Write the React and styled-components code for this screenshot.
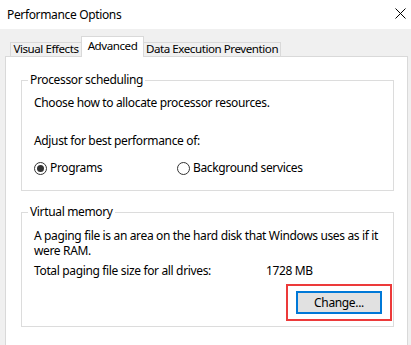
import React from "react";
import styled, { createGlobalStyle } from "styled-components";

const GlobalStyle = createGlobalStyle`
  html, body { margin: 0; padding: 0; }
  body {
    background: #f0f0f0;
    font-family: "Noto Sans", "Liberation Sans", sans-serif;
    font-size: 12px;
    letter-spacing: -0.35px;
    color: #000;
  }
`;

const Window = styled.div`
  width: 411px;
  height: 345px;
  overflow: hidden;
  background: #f0f0f0;
  display: flex;
  flex-direction: column;
`;

const TitleBar = styled.div`
  height: 29px;
  flex: none;
  background: #fff;
  display: flex;
  align-items: center;
  justify-content: space-between;
  padding: 0 5px 0 7px;
  box-sizing: border-box;
  line-height: 16px;
`;

const Title = styled.span`
  font-size: 12px;
`;

const CloseIcon = styled.svg`
  width: 11px;
  height: 11px;
  margin-bottom: 2px;
`;

const Body = styled.div`
  flex: 1;
  display: flex;
  flex-direction: column;
  padding: 7px 3px 0 5px;
  min-height: 0;
`;

const TabStrip = styled.div`
  display: flex;
  align-items: flex-end;
  padding-left: 5px;
  margin-bottom: -1px;
  position: relative;
  z-index: 1;
`;

const Tab = styled.div`
  box-sizing: border-box;
  flex: none;
  width: ${(p) => p.$w}px;
  height: ${(p) => (p.$active ? 21 : 14)}px;
  margin-bottom: ${(p) => (p.$active ? 0 : 1)}px;
  background: ${(p) => (p.$active ? "#fff" : "#f0f0f0")};
  border: 1px solid #d9d9d9;
  border-bottom: none;
  border-left-style: ${(p) => (p.$noLeft ? "none" : "solid")};
  border-right-style: ${(p) => (p.$noRight ? "none" : "solid")};
  text-align: center;
  font-size: 11.6px;
  letter-spacing: -0.45px;
  line-height: 12px;
  padding-top: ${(p) => (p.$active ? 3 : 0)}px;
  white-space: nowrap;
`;

const Panel = styled.div`
  flex: 1;
  background: #fff;
  border: 1px solid #d9d9d9;
  border-bottom: none;
  padding: 15px 13px 0 15px;
  display: flex;
  flex-direction: column;
  gap: 13px;
`;

const Group = styled.fieldset`
  margin: 0;
  border: 1px solid #dcdcdc;
  padding: 0 12px ${(p) => p.$pb}px 12px;
  display: flex;
  flex-direction: column;
  min-width: 0;
`;

const Legend = styled.legend`
  padding: 0 2px;
  margin-left: -6px;
  line-height: 16px;
`;

const Text = styled.div`
  line-height: ${(p) => p.$lh || 16}px;
  margin-top: ${(p) => p.$mt || 0}px;
  white-space: nowrap;
`;

const RadioRow = styled.div`
  display: grid;
  grid-template-columns: 143px auto;
  margin-top: 11px;
  line-height: 16px;
`;

const RadioOption = styled.label`
  display: flex;
  align-items: center;
  gap: 3px;
`;

const RadioCircle = styled.span`
  box-sizing: border-box;
  width: 13px;
  height: 13px;
  border-radius: 50%;
  border: 1px solid #333;
  display: flex;
  align-items: center;
  justify-content: center;
  background: #fff;
  &::after {
    content: "";
    width: 7px;
    height: 7px;
    border-radius: 50%;
    background: ${(p) => (p.$checked ? "#333" : "transparent")};
  }
`;

const TotalRow = styled.div`
  display: grid;
  grid-template-columns: 232px auto;
  line-height: 16px;
  margin-top: 5px;
  white-space: nowrap;
`;

const Highlight = styled.div`
  align-self: flex-end;
  margin-right: -11px;
  margin-top: 5px;
  border: 2px solid #ec3a3a;
  padding: 5px 8px;
  display: flex;
`;

const Button = styled.button`
  box-sizing: border-box;
  width: 86px;
  height: 23px;
  background: #e1e1e1;
  border: 2px solid #0078d7;
  font: inherit;
  font-size: 12px;
  letter-spacing: -0.35px;
  color: #000;
  padding: 0;
  line-height: 16px;
`;

export default function App() {
  return (
    <>
      <GlobalStyle />
      <Window>
        <TitleBar>
          <Title>Performance Options</Title>
          <CloseIcon viewBox="0 0 11 11">
            <path d="M0.5 0.5 L10.5 10.5 M10.5 0.5 L0.5 10.5" stroke="#000" strokeWidth="1" fill="none" />
          </CloseIcon>
        </TitleBar>
        <Body>
          <TabStrip>
            <Tab $w={71} $noRight>Visual Effects</Tab>
            <Tab $w={63} $active>Advanced</Tab>
            <Tab $w={137} $noLeft>Data Execution Prevention</Tab>
          </TabStrip>
          <Panel>
            <Group $pb={14}>
              <Legend>Processor scheduling</Legend>
              <Text $mt={7}>Choose how to allocate processor resources.</Text>
              <Text $mt={22}>Adjust for best performance of:</Text>
              <RadioRow>
                <RadioOption>
                  <RadioCircle $checked />
                  Programs
                </RadioOption>
                <RadioOption>
                  <RadioCircle />
                  Background services
                </RadioOption>
              </RadioRow>
            </Group>
            <Group $pb={5}>
              <Legend>Virtual memory</Legend>
              <Text $mt={8} $lh={15}>
                A paging file is an area on the hard disk that Windows uses as if it
                <br />
                were RAM.
              </Text>
              <TotalRow>
                <span>Total paging file size for all drives:</span>
                <span>1728 MB</span>
              </TotalRow>
              <Highlight>
                <Button>Change...</Button>
              </Highlight>
            </Group>
          </Panel>
        </Body>
      </Window>
    </>
  );
}
